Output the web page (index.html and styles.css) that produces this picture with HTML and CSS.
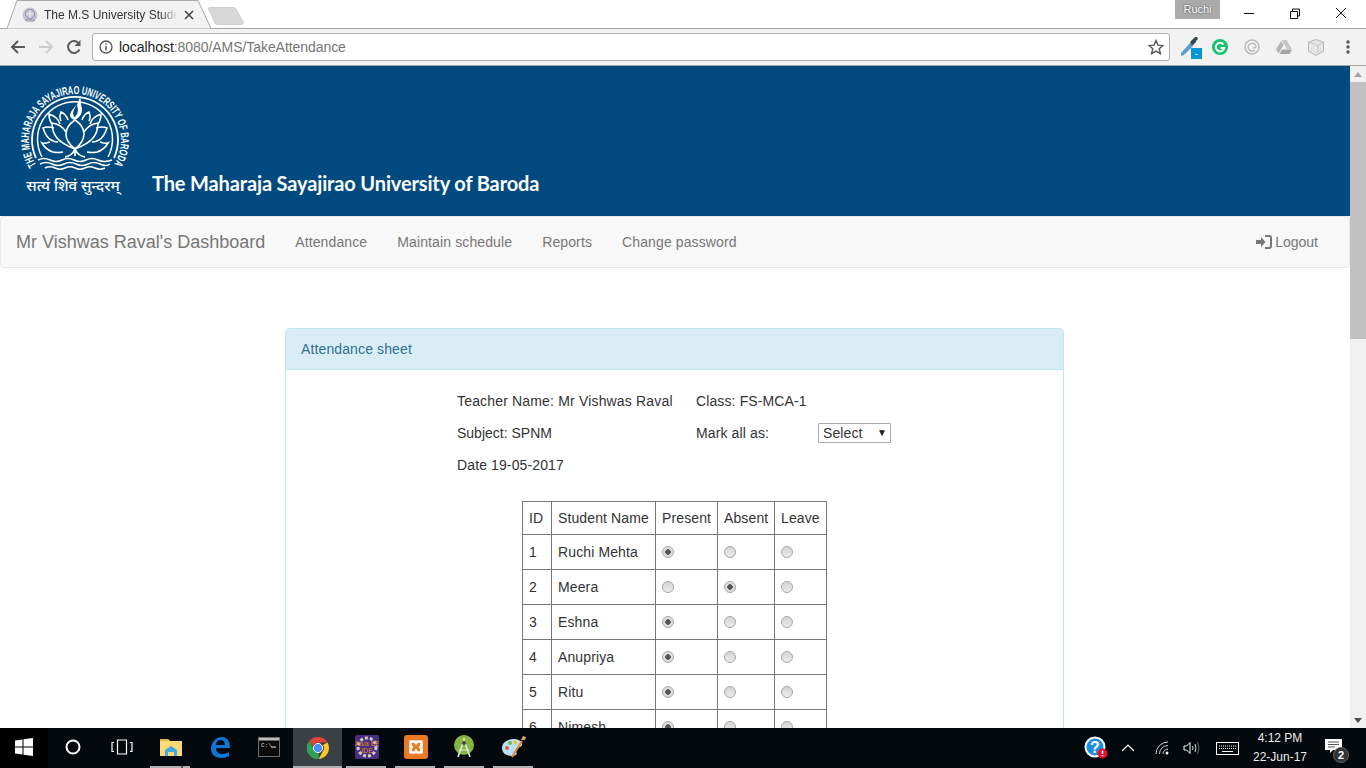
FILE: index.html
```html
<!DOCTYPE html>
<html lang="en">
<head>
    <meta charset="UTF-8">
    <title>The M.S University Student Attendance</title>
    <link rel="stylesheet" href="styles.css">
</head>
<body>

    <!-- browser window top -->
    <div class="tabstrip">
        <div class="tab">
            <svg class="tab-shape" width="208" height="29" viewBox="0 0 208 29">
                <path d="M0 28.5H3L13 .5H194L207 28.5" fill="#f2f2f2" stroke="#a6a6a6"/>
            </svg>
            <svg class="favicon" width="16" height="16" viewBox="0 0 16 16">
                <circle cx="8" cy="8" r="7.5" fill="#c4c4d2"/>
                <circle cx="8" cy="7" r="4.5" fill="none" stroke="#8d8da5"/>
                <path d="M8 3v8M4 7h8" stroke="#f2f2f2"/>
                <path d="M3 13h10" stroke="#8d8da5"/>
            </svg>
            <span class="tab-title">The M.S University Stude</span>
            <svg class="tab-close" width="10" height="10" viewBox="0 0 10 10">
                <path d="M1 1l8 8M9 1l-8 8" stroke="#444" stroke-width="1.6"/>
            </svg>
        </div>
        <svg class="newtab" width="36" height="18" viewBox="0 0 36 18">
            <path d="M1 .5H25Q27 .5 28 2L35 15Q36 17.5 33 17.5H10Q8 17.5 7 16L1 3Q0 .5 1 .5Z" fill="#d8d8d8" stroke="#cfcfcf"/>
        </svg>
        <div class="profile">Ruchi</div>
        <div class="winbtns">
            <svg width="46" height="29" viewBox="0 0 46 29"><path d="M18 13.500h10" stroke="#111"/></svg>
            <svg width="46" height="29" viewBox="0 0 46 29"><path d="M18.500 11.500h7v7h-7zM20.500 11v-2h7v7h-2" fill="none" stroke="#111"/></svg>
            <svg width="46" height="29" viewBox="0 0 46 29"><path d="M18 8l10 10M28 8L18 18" stroke="#111"/></svg>
        </div>
    </div>

    <div class="toolbar">
        <svg class="navbtn" width="16" height="16" viewBox="0 0 16 16"><path d="M15 8H2M8 2L2 8l6 6" fill="none" stroke="#5a5a5a" stroke-width="2"/></svg>
        <svg class="navbtn" width="16" height="16" viewBox="0 0 16 16"><path d="M1 8h13M8 2l6 6-6 6" fill="none" stroke="#cdcdcd" stroke-width="2"/></svg>
        <svg class="navbtn" width="16" height="16" viewBox="0 0 16 16"><path d="M13.500 10.500A6 6 0 1 1 13 4.500" fill="none" stroke="#5a5a5a" stroke-width="2"/><path d="M14.500 1v6h-6z" fill="#5a5a5a"/></svg>
        <div class="omnibox">
            <svg width="14" height="14" viewBox="0 0 14 14"><circle cx="7" cy="7" r="6" fill="none" stroke="#555" stroke-width="1.300"/><path d="M7 6v4.500" stroke="#555" stroke-width="1.500"/><path d="M7 3.200v1.600" stroke="#555" stroke-width="1.500"/></svg>
            <span class="url"><span class="host">localhost</span>:8080/AMS/TakeAttendance</span>
            <svg class="star" width="16" height="16" viewBox="0 0 16 16"><path d="M8 1.500l2 4.600 5 .4-3.800 3.300 1.200 4.900L8 12.100l-4.400 2.600 1.200-4.900L1 6.500l5-.4z" fill="none" stroke="#555" stroke-width="1.400"/></svg>
        </div>
        <div class="extensions">
            <svg class="dropper" width="22" height="24" viewBox="0 0 22 24">
                <path d="M1 18L10 8l3 3-9 9-3 1z" fill="#5b9bd0"/><path d="M10 7l5-5 2 0 1 2-2 2 0 1-4 4z" fill="#37474f"/>
                <rect x="11" y="13" width="11" height="11" fill="#0a95d8"/><rect x="15.500" y="19" width="2" height="1" fill="#fff"/>
            </svg>
            <svg width="16" height="16" viewBox="0 0 16 16"><circle cx="8" cy="8" r="8" fill="#15c26b"/><path d="M11.500 5.500A4.300 4.300 0 1 0 12.300 9H8.500" fill="none" stroke="#fff" stroke-width="2"/></svg>
            <svg width="16" height="16" viewBox="0 0 16 16"><circle cx="8" cy="8" r="7" fill="none" stroke="#bcbcbc" stroke-width="1.500"/><path d="M11 11A4 4 0 1 1 12 7c0 2-2 2.500-3 1.500" fill="none" stroke="#bcbcbc" stroke-width="1.500"/></svg>
            <svg width="16" height="14" viewBox="0 0 16 14"><path d="M5.500 0h5L16 9h-5z" fill="#c6c6c6"/><path d="M5 1L0 9.500l2.500 4L7.500 5z" fill="#b4b4b4"/><path d="M6 9.500h10L13.500 14H3.500z" fill="#a6a6a6"/></svg>
            <svg width="16" height="17" viewBox="0 0 16 17"><path d="M8 .5l7.500 2.500v9L8 16.500.5 12V3z" fill="#e6e6e6" stroke="#b4b4b4"/><path d="M10 6.500v9M.5 3L10 6.500 15.500 3" fill="none" stroke="#c4c4c4"/></svg>
            <svg class="dots" width="4" height="14" viewBox="0 0 4 14"><circle cx="2" cy="2" r="1.700" fill="#555"/><circle cx="2" cy="7" r="1.700" fill="#555"/><circle cx="2" cy="12" r="1.700" fill="#555"/></svg>
        </div>
    </div>

    <!-- page area -->
    <div class="viewport">
        <div class="page">
            <header class="banner">
                <svg class="logo" width="136" height="150" viewBox="0 0 136 150">
                    <defs>
                        <path id="logoArc" d="M36.400 99A46 46 0 1 1 113.600 99"/>
                    </defs>
                    <text class="logo-ring-text"><textPath href="#logoArc" textLength="196" lengthAdjust="spacingAndGlyphs">THE MAHARAJA SAYAJIRAO UNIVERSITY OF BARODA</textPath></text>
                    <g fill="none" stroke="#fff">
                        <path d="M36 92A43 43 0 1 1 114 92" stroke-width="1.800"/>
                        <path d="M42 91A37.500 37.500 0 1 1 108 91" stroke-width="1.500"/>
                        <path d="M38 94q6-3 12 0t12 0 12 0 12 0 12 0 14 0" stroke-width="1.500"/>
                        <path d="M40 98q6-3 12 0t12 0 12 0 12 0 12 0 10 0" stroke-width="1.500"/>
                        <path d="M45 102q5-2.500 10 0t10 0 10 0 10 0 10 0 10 0" stroke-width="1.500"/>
                        <path d="M75 83v7M65 91q7-1 10-8 3 7 10 8" stroke-width="1.800"/>
                        <g stroke-width="1.600">
                            <path d="M75 54q-9 6-9 14t9 15q9-7 9-15t-9-14z"/>
                            <path d="M66 66q-5-8-14-9 0 9 5 15t18 11"/>
                            <path d="M84 66q5-8 14-9 0 9-5 15t-18 11"/>
                            <path d="M54 62q-7-2-11 0 3 9 8 12 3 2 7 2"/>
                            <path d="M96 62q7-2 11 0-3 9-8 12-3 2-7 2"/>
                            <path d="M60 58q-2-7-11-10 0 6 3 10M90 58q2-7 11-10 0 6-3 10"/>
                            <path d="M68 54q-2-6-7-8-2 5 0 9M82 54q2-6 7-8 2 5 0 9"/>
                            <path d="M50 76q-6 2-8 1 4 7 11 9 5 1 10 0M100 76q6 2 8 1-4 7-11 9-5 1-10 0"/>
                        </g>
                    </g>
                    <path d="M80 30q-1 7-6 12-4 4-4 8 1 3 5 4 6-3 7-9 0-4-1-7 0-4-1-8z" fill="#fff"/>
                    <path d="M77 38q-3 5-4 9 0 3 2 4 3-3 3-7z" fill="#004a7f"/>
                    <text class="logo-motto" x="73" y="125" text-anchor="middle">सत्यं शिवं सुन्दरम्</text>
                </svg>
                <div class="uni-name">The Maharaja Sayajirao University of Baroda</div>
            </header>

            <nav class="navbar">
                <a class="brand">Mr Vishwas Raval's Dashboard</a>
                <a class="nav-link">Attendance</a>
                <a class="nav-link">Maintain schedule</a>
                <a class="nav-link">Reports</a>
                <a class="nav-link">Change password</a>
                <a class="logout">
                    <svg width="16" height="14" viewBox="0 0 16 14"><path d="M0 5h5V2l4.500 5L5 12V9H0z" fill="#777"/><path d="M9 1h4q2 0 2 2v8q0 2-2 2H9" fill="none" stroke="#777" stroke-width="2"/></svg>
                    Logout
                </a>
            </nav>

            <section class="panel">
                <div class="panel-heading">Attendance sheet</div>
                <div class="panel-body">
                    <div class="sheet-info">
                        <div class="teacher">Teacher Name: Mr Vishwas Raval</div>
                        <div class="span2">Class: FS-MCA-1</div>
                        <div class="subject">Subject: SPNM</div>
                        <div>Mark all as:</div>
                        <div class="fake-select">Select<span class="arrow">▼</span></div>
                        <div>Date 19-05-2017</div>
                    </div>
                    <table class="students">
                        <tr><td>ID</td><td>Student Name</td><td>Present</td><td>Absent</td><td>Leave</td></tr>
                        <tr><td>1</td><td>Ruchi Mehta</td><td><span class="radio on"></span></td><td><span class="radio"></span></td><td><span class="radio"></span></td></tr>
                        <tr><td>2</td><td>Meera</td><td><span class="radio"></span></td><td><span class="radio on"></span></td><td><span class="radio"></span></td></tr>
                        <tr><td>3</td><td>Eshna</td><td><span class="radio on"></span></td><td><span class="radio"></span></td><td><span class="radio"></span></td></tr>
                        <tr><td>4</td><td>Anupriya</td><td><span class="radio on"></span></td><td><span class="radio"></span></td><td><span class="radio"></span></td></tr>
                        <tr><td>5</td><td>Ritu</td><td><span class="radio on"></span></td><td><span class="radio"></span></td><td><span class="radio"></span></td></tr>
                        <tr><td>6</td><td>Nimesh</td><td><span class="radio on"></span></td><td><span class="radio"></span></td><td><span class="radio"></span></td></tr>
                    </table>
                </div>
            </section>
        </div>
        <div class="scrollbar">
            <span class="sb-up"></span>
            <div class="sb-thumb"></div>
            <span class="sb-down"></span>
        </div>
    </div>

    <!-- windows taskbar -->
    <div class="taskbar">
        <div class="task first"><svg width="18" height="18" viewBox="0 0 18 18"><path d="M0 2.500L7.500 1.400V8.500H0zM8.500 1.300L18 0V8.500H8.500zM0 9.500H7.500V16.600L0 15.500zM8.500 9.500H18V18L8.500 16.700z" fill="#fff"/></svg></div>
        <div class="task"><svg width="16" height="16" viewBox="0 0 16 16"><circle cx="8" cy="8" r="6.500" fill="none" stroke="#fff" stroke-width="2"/></svg></div>
        <div class="task"><svg width="22" height="16" viewBox="0 0 22 16"><path d="M6.500 1h9v14h-9zM3 3.500H1v9h2M19 3.500h2v9h-2" fill="none" stroke="#fff" stroke-width="1.200"/></svg></div>
        <div class="task open split">
            <svg width="22" height="18" viewBox="0 0 22 18"><path d="M0 1h8l2 2h12v15H0z" fill="#fbd976"/><path d="M0 1h8v2H0z" fill="#e5b84c"/><path d="M5 12l6-4 6 4v6h-3v-4H8v4H5z" fill="#3fa9e0"/></svg>
        </div>
        <div class="task"><svg width="20" height="21" viewBox="0 0 20 21"><path d="M1 12C1 5 6 0 12 0c5 0 8 4 8 11H6c0 4 3 6 6 6 3 0 5-1 7-2v4c-2 1-4 2-8 2C5 21 1 17 1 12zM6 8h9c0-3-2-5-4-5-3 0-5 2-5 5z" fill="#0a78d7"/></svg></div>
        <div class="task"><svg width="22" height="20" viewBox="0 0 22 20"><rect x=".5" y=".5" width="21" height="19" fill="#0b0b0b" stroke="#6d6d6d"/><rect x="1" y="1" width="20" height="2.500" fill="#bdbdbd"/><text x="3" y="10" class="cmd-text">C:\_</text><path d="M13 10h5" stroke="#ddd"/></svg></div>
        <div class="task active"><svg width="22" height="22" viewBox="0 0 22 22"><path d="M11 0a11 11 0 0 1 9.500 5.500H11a5.500 5.500 0 0 0-5.200 3.700L2.300 3.900A11 11 0 0 1 11 0z" fill="#e0443a"/><path d="M20.500 5.500A11 11 0 0 1 11.500 22l4.300-7.500a5.500 5.500 0 0 0 .1-6.500z" fill="#fbc72f"/><path d="M2.300 3.900l4.400 7.600a5.500 5.500 0 0 0 5.300 5l-.5 5.500A11 11 0 0 1 2.300 3.900z" fill="#2fa44f"/><circle cx="11" cy="11" r="4.600" fill="#4b8df0" stroke="#fff" stroke-width="1"/></svg></div>
        <div class="task open"><svg width="24" height="24" viewBox="0 0 24 24"><rect width="24" height="24" rx="2" fill="#4b2f7f"/><circle cx="12" cy="12" r="9" fill="none" stroke="#ccc" stroke-width="3" stroke-dasharray="3 2"/><text x="12" y="11" class="jee-text">Java EE</text><text x="12" y="18" class="jee-text">IDE</text></svg></div>
        <div class="task open"><svg width="24" height="24" viewBox="0 0 24 24"><rect width="24" height="24" rx="3" fill="#ea7a24"/><path d="M6.500 6.500h3.500q2 0 2 2 0-2 2-2h3.500v4q0 1.500-1.500 1.500 1.500 0 1.500 1.500v4H14q-2 0-2-2 0 2-2 2H6.500v-4q0-1.500 1.500-1.500-1.500 0-1.500-1.500z" fill="none" stroke="#fff" stroke-width="2.600" stroke-linejoin="round"/></svg></div>
        <div class="task open"><svg width="24" height="24" viewBox="0 0 24 24"><circle cx="11" cy="10" r="10" fill="#85b63e"/><path d="M11 3v3M5 22l5-14h2l5 14" fill="none" stroke="#e8e8e8" stroke-width="1.600"/><path d="M6 15h10" stroke="#e8e8e8"/><circle cx="11" cy="8" r="2" fill="#444"/></svg></div>
        <div class="task open"><svg width="26" height="24" viewBox="0 0 26 24"><path d="M1 13C1 7 7 4 13 4c5 0 9 3 8 6-1 3-5 2-6 4-1 3 2 4 0 6-4 2-14 1-14-7z" fill="#b9dff2"/><circle cx="6" cy="13" r="2" fill="#e0564a"/><circle cx="9" cy="8" r="2" fill="#6db85a"/><circle cx="14" cy="7.500" r="2" fill="#f1c332"/><path d="M11 22L21 6" stroke="#e58a2b" stroke-width="2"/><path d="M20 5l2-4 3 1-1 3z" fill="#d4a36b"/></svg></div>

        <div class="tray">
            <svg class="help" width="24" height="24" viewBox="0 0 24 24"><circle cx="11" cy="11" r="10.500" fill="#fff"/><circle cx="11" cy="11" r="8.500" fill="#1b8fe0"/><text x="11" y="16.500" class="help-q">?</text><circle cx="18.500" cy="17.500" r="5" fill="#e8112d"/><path d="M18.500 14.500v3.500M18.500 19v1.300" stroke="#fff" stroke-width="1.400"/></svg>
            <svg class="chev" width="14" height="8" viewBox="0 0 14 8"><path d="M1 7l6-6 6 6" fill="none" stroke="#fff" stroke-width="1.200"/></svg>
            <svg class="wifi" width="14" height="14" viewBox="0 0 14 14"><path d="M1 13A12 12 0 0 1 13 1M4.500 13A8.500 8.500 0 0 1 13 4.500M8 13A5 5 0 0 1 13 8" fill="none" stroke="#ccc"/><circle cx="12" cy="12" r="1.500" fill="#fff"/></svg>
            <svg class="vol" width="18" height="14" viewBox="0 0 18 14"><path d="M1 5h2.500L7 1.500v11L3.500 9H1z" fill="none" stroke="#fff"/><path d="M9.500 5q1 2 0 4M12 3q2 4 0 8" fill="none" stroke="#ddd"/><path d="M14.500 1q3 6 0 12" fill="none" stroke="#666"/></svg>
            <svg class="kbd" width="23" height="13" viewBox="0 0 23 13"><rect x=".5" y=".5" width="22" height="12" fill="none" stroke="#fff"/><path d="M3 4h17M3 6.500h17" stroke="#fff" stroke-dasharray="1 1"/><path d="M6 9.500h11" stroke="#fff"/></svg>
            <div class="clock"><div>4:12 PM</div><div>22-Jun-17</div></div>
            <div class="notif">
                <svg width="17" height="14" viewBox="0 0 17 14"><path d="M0 0h17v11H8l-3 3v-3H0z" fill="#fff"/><path d="M3 3h11M3 5.500h11M3 8h7" stroke="#555"/></svg>
                <span class="notif-count">2</span>
            </div>
        </div>
    </div>

</body>
</html>
```

FILE: styles.css
```css
html, body {
    margin: 0;
    height: 100%;
    overflow: hidden;
}
body {
    font-family: "Liberation Sans", Arial, sans-serif;
    font-size: 14px;
    color: #333;
    display: flex;
    flex-direction: column;
    height: 768px;
}

/* tab strip */
.tabstrip {
    height: 29px;
    background: #fff;
    display: flex;
    align-items: flex-start;
    box-sizing: border-box;
    border-bottom: 1px solid #a6a6a6;
    flex-shrink: 0;
}
.tab {
    position: relative;
    width: 208px;
    height: 29px;
    margin-left: 4px;
    display: flex;
    align-items: center;
    padding-left: 18px;
    box-sizing: border-box;
}
.tab-shape {
    position: absolute;
    left: 0;
    top: 0;
}
.favicon, .tab-title, .tab-close {
    position: relative;
}
.tab-title {
    font-size: 12px;
    color: #333;
    margin-left: 6px;
    width: 136px;
    white-space: nowrap;
    -webkit-mask-image: linear-gradient(to right, #000 86%, transparent 98%);
}
.tab-close {
    margin-left: 4px;
}
.newtab {
    margin: 7px 0 0 -4px;
}
.profile {
    margin-left: auto;
    margin-right: 6px;
    width: 45px;
    height: 19px;
    background: #ababab;
    color: #fff;
    font-size: 11px;
    text-align: center;
    line-height: 18px;
    text-shadow: 0 0 2px #333;
}
.winbtns {
    display: flex;
    width: 138px;
    margin-right: 2px;
    justify-content: flex-end;
}
.winbtns svg {
    display: block;
}

/* toolbar */
.toolbar {
    height: 37px;
    background: #f2f2f2;
    border-bottom: 1px solid #a6a6a6;
    box-sizing: border-box;
    display: flex;
    align-items: center;
    padding-left: 10px;
    flex-shrink: 0;
}
.navbtn {
    margin-right: 12px;
    flex-shrink: 0;
}
.navbtn:nth-child(3) {
    margin-right: 10px;
}
.omnibox {
    width: 1078px;
    height: 28px;
    box-sizing: border-box;
    background: #fff;
    border: 1px solid #b0b0b0;
    border-radius: 3px;
    display: flex;
    align-items: center;
    padding: 0 5px 0 6px;
    flex-shrink: 0;
}
.url {
    margin-left: 6px;
    font-size: 14px;
    letter-spacing: -.06px;
    color: #777;
    flex: 1;
}
.host {
    color: #222;
}
.extensions {
    display: flex;
    align-items: center;
    margin-left: 10px;
    gap: 16px;
}
.dropper {
    margin-right: -6px;
}
.dots {
    margin-left: 6px;
}

/* page */
.viewport {
    height: 662px;
    display: flex;
    flex-shrink: 0;
    overflow: hidden;
}
.page {
    width: 1350px;
    overflow: hidden;
    background: #fff;
    letter-spacing: .12px;
}
.banner {
    height: 150px;
    background: #004a7f;
    display: flex;
    align-items: flex-end;
    letter-spacing: 0;
}
.logo {
    flex-shrink: 0;
    display: block;
}
.logo-ring-text {
    font-size: 11.5px;
    font-weight: bold;
    fill: #fff;
}
.logo-motto {
    font-family: "Noto Sans", "Noto Sans CJK SC", sans-serif;
    font-size: 15px;
    font-weight: 500;
    fill: #fff;
}
.uni-name {
    margin: 0 0 20px 16px;
    font-family: Lato, sans-serif;
    font-weight: 700;
    font-size: 20px;
    letter-spacing: -.14px;
    line-height: 26px;
    color: #fff;
    white-space: nowrap;
}
.navbar {
    height: 52px;
    box-sizing: border-box;
    background: #f8f8f8;
    border: 1px solid #e7e7e7;
    border-radius: 4px;
    display: flex;
    align-items: center;
    color: #777;
    padding: 0 31px 0 15px;
}
.brand {
    font-size: 18px;
    letter-spacing: 0;
    margin-right: 30px;
}
.nav-link {
    margin-right: 30px;
}
.logout {
    margin-left: auto;
    display: flex;
    align-items: center;
    gap: 3px;
    letter-spacing: 0;
}
.panel {
    width: 779px;
    box-sizing: border-box;
    margin: 60px 0 0 285px;
    border: 1px solid #bce8f1;
    border-radius: 4px;
    background: #fff;
    height: 500px;
}
.panel-heading {
    height: 41px;
    box-sizing: border-box;
    background: #d9edf7;
    color: #31708f;
    border-bottom: 1px solid #bce8f1;
    border-radius: 3px 3px 0 0;
    padding: 0 15px;
    line-height: 40px;
}
.panel-body {
    padding: 15px 0 0 171px;
}
.sheet-info {
    display: grid;
    grid-template-columns: 239px 122px 100px;
    grid-auto-rows: 32px;
    align-items: center;
}
.teacher {
    letter-spacing: .17px;
}
.subject {
    letter-spacing: 0;
}
.span2 {
    grid-column: span 2;
}
.fake-select {
    width: 73px;
    height: 20px;
    box-sizing: border-box;
    border: 1px solid #aaa;
    border-radius: 1px;
    padding-left: 4px;
    line-height: 18px;
    display: flex;
    justify-content: space-between;
    color: #333;
}
.arrow {
    font-size: 10px;
    margin-right: 3px;
    color: #222;
}
.students {
    border-collapse: collapse;
    table-layout: fixed;
    width: 305px;
    margin: 20px 0 0 65px;
    border: 1px solid #222;
}
.students td {
    border: 1px solid #777;
    padding: 0 6px;
    height: 35px;
    box-sizing: border-box;
    white-space: nowrap;
}
.students tr:first-child td {
    height: 33px;
}
.students td:nth-child(1) { width: 29px; }
.students td:nth-child(2) { width: 104px; }
.students td:nth-child(3) { width: 62px; }
.students td:nth-child(4) { width: 57px; }
.radio {
    display: block;
    width: 12px;
    height: 12px;
    box-sizing: border-box;
    border-radius: 50%;
    border: 1px solid #a8a8a8;
    background: linear-gradient(#d4d4d4, #ececec);
    margin-bottom: 1px;
}
.radio.on {
    background: radial-gradient(circle, #555 0, #555 2.500px, #dedede 3px);
}

/* scrollbar */
.scrollbar {
    width: 16px;
    background: #f1f1f1;
    display: flex;
    flex-direction: column;
    align-items: center;
}
.sb-up {
    margin: 6px 0 5px;
    border: 4px solid transparent;
    border-top: 0;
    border-bottom: 5px solid #a3a3a3;
}
.sb-thumb {
    width: 16px;
    height: 257px;
    background: #c1c1c1;
}
.sb-down {
    margin-top: auto;
    margin-bottom: 5px;
    border: 4px solid transparent;
    border-bottom: 0;
    border-top: 5px solid #505050;
}

/* taskbar */
.taskbar {
    height: 40px;
    background: #03090c;
    display: flex;
    flex-shrink: 0;
}
.task {
    width: 49px;
    height: 40px;
    display: flex;
    align-items: center;
    justify-content: center;
    box-sizing: border-box;
    border-bottom: 3px solid transparent;
    padding-top: 1px;
    flex-shrink: 0;
}
.task.first {
    width: 48px;
    padding-right: 1px;
    background: #000;
}
.task.open {
    position: relative;
}
.task.open::after {
    content: "";
    position: absolute;
    left: 4px;
    right: 5px;
    bottom: -3px;
    height: 2px;
    background: #b0b0b0;
}
.task.split::after {
    background: linear-gradient(to right, #b0b0b0 78%, #555 78%, #555 82%, #b0b0b0 82%);
}
.task.active {
    background: #3a4043;
    border-bottom: 2px solid #b0b0b0;
}
.cmd-text {
    font-family: "Liberation Mono", monospace;
    font-size: 6px;
    fill: #ddd;
}
.jee-text {
    font-size: 7px;
    fill: #e08a28;
    text-anchor: middle;
}
.help-q {
    font-size: 16px;
    font-weight: bold;
    fill: #fff;
    text-anchor: middle;
}
.tray {
    margin-left: auto;
    display: flex;
    align-items: center;
    color: #fff;
    font-size: 12px;
    margin-right: 8px;
}
.help {
    margin-right: 13px;
}
.chev {
    margin-right: 20px;
}
.wifi {
    margin-right: 14px;
}
.vol {
    margin-right: 15px;
}
.kbd {
    margin-right: 13px;
}
.clock {
    width: 56px;
    text-align: center;
    line-height: 19px;
    color: #eee;
    white-space: nowrap;
}
.notif {
    width: 50px;
    height: 40px;
    position: relative;
    display: flex;
    align-items: center;
    justify-content: center;
    padding-bottom: 5px;
    box-sizing: border-box;
}
.notif-count {
    position: absolute;
    left: 25px;
    top: 19px;
    width: 16px;
    height: 16px;
    box-sizing: border-box;
    border-radius: 50%;
    background: #333;
    border: 1px solid #666;
    font-size: 11px;
    font-weight: bold;
    text-align: center;
    line-height: 14px;
}
```
